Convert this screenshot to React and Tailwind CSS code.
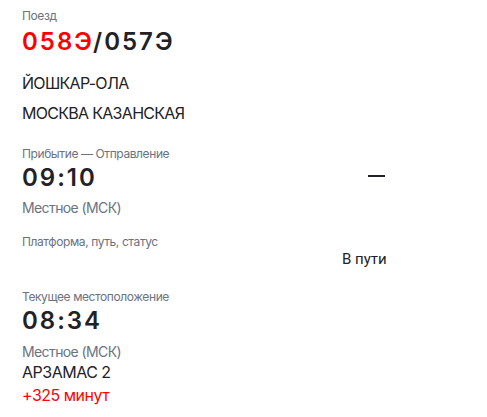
export default function App() {
  const f = { fontFamily: 'Inter, "Noto Sans", sans-serif' };
  const lbl = "text-[12px] leading-[14px] tracking-[-0.4px] text-[#6b7280]";
  const big = "text-[24px] leading-[28px] font-semibold tracking-[2px] text-[#222226]";
  const sub = "text-[14px] leading-[18px] tracking-[-0.6px] text-[#6b7280]";
  return (
    <div className="w-[487px] h-[417px] bg-white text-[#222226]" style={f}>
      <div className="pl-[22px] pt-[9px]">
        <div className={lbl}>Поезд</div>
        <div className={"mt-[5px] " + big}>
          <span className="text-[#ff0000]">058Э</span>/057Э
        </div>
        <div className="mt-[12px] text-[16px] leading-[30px] tracking-[-0.7px]">
          <div>ЙОШКАР-ОЛА</div>
          <div>МОСКВА КАЗАНСКАЯ</div>
        </div>
        <div className="mt-[19px] flex">
          <div className="w-[320px]">
            <div className={lbl}>Прибытие — Отправление</div>
            <div className={"mt-[3px] " + big}>09:10</div>
            <div className={"mt-[7px] " + sub}>Местное (МСК)</div>
          </div>
          <div className="pt-[28px] pl-[26px]">
            <div className="w-[17px] h-[2px] bg-[#222226]" />
          </div>
        </div>
        <div className="mt-[18px] flex">
          <div className="w-[320px]">
            <div className={lbl}>Платформа, путь, статус</div>
          </div>
        </div>
        <div className="flex">
          <div className="w-[320px]" />
          <div className="mt-[1px] text-[15px] leading-[18px]" style={{ fontFamily: 'Roboto, sans-serif' }}>В пути</div>
        </div>
        <div className="mt-[22px]">
          <div className={lbl}>Текущее местоположение</div>
          <div className={"mt-[3px] " + big}>08:34</div>
          <div className={"mt-[8px] " + sub}>Местное (МСК)</div>
          <div className="mt-[1px] text-[16px] leading-[20px] tracking-[-0.5px]">АРЗАМАС 2</div>
          <div className="mt-[3px] text-[16px] leading-[20px] tracking-[-0.5px] text-[#ff0000]">+325 минут</div>
        </div>
      </div>
    </div>
  );
}
